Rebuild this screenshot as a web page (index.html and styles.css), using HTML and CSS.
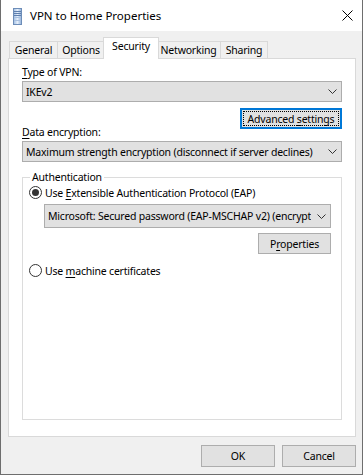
FILE: index.html
```html
<!DOCTYPE html>
<html lang="en">
<head>
  <meta charset="UTF-8">
  <title>VPN to Home Properties</title>
  <link rel="stylesheet" href="styles.css">
</head>
<body>
  <div class="window">
    <div class="titlebar">
      <svg class="title-icon" width="9" height="17" viewBox="0 0 9 17">
        <defs>
          <linearGradient id="tower" x1="0" x2="1" y1="0" y2="0">
            <stop offset="0" stop-color="#9fbde3"/>
            <stop offset="0.5" stop-color="#e4eefa"/>
            <stop offset="1" stop-color="#8eaed8"/>
          </linearGradient>
        </defs>
        <rect x="0.5" y="0.5" width="8" height="16" fill="url(#tower)" stroke="#6d8db8"/>
        <line x1="1" y1="3.5" x2="8" y2="3.5" stroke="#5f7fae"/>
        <line x1="1" y1="5.5" x2="8" y2="5.5" stroke="#5f7fae"/>
        <line x1="1" y1="7.5" x2="8" y2="7.5" stroke="#5f7fae"/>
        <line x1="1" y1="9.5" x2="8" y2="9.5" stroke="#a8c0e0"/>
        <line x1="1" y1="12.5" x2="8" y2="12.5" stroke="#a8c0e0"/>
      </svg>
      <span class="title-text">VPN to Home Properties</span>
      <svg class="close" width="11" height="11" viewBox="0 0 11 11">
        <path d="M0.5 0.5 L10.5 10.5 M10.5 0.5 L0.5 10.5" stroke="#000" stroke-width="1"/>
      </svg>
    </div>

    <div class="tabs">
      <div class="tab tab-general">General</div>
      <div class="tab tab-options">Options</div>
      <div class="tab tab-security selected">Security</div>
      <div class="tab tab-networking">Networking</div>
      <div class="tab tab-sharing">Sharing</div>
    </div>

    <div class="panel">
      <div class="label first"><u>T</u>ype of VPN:</div>
      <div class="select first">
        <span class="value">IKEv2</span>
        <svg class="arrow" width="9" height="5" viewBox="0 0 9 5"><polyline points="0.5,0.5 4.5,4.5 8.5,0.5" fill="none" stroke="#333"/></svg>
      </div>
      <div class="row-right">
        <div class="button focused"><span class="focus-ring"><span>Advanced <u>s</u>ettings</span></span></div>
      </div>
      <div class="label second"><u>D</u>ata encryption:</div>
      <div class="select">
        <span class="value">Maximum strength encryption (disconnect if server declines)</span>
        <svg class="arrow" width="9" height="5" viewBox="0 0 9 5"><polyline points="0.5,0.5 4.5,4.5 8.5,0.5" fill="none" stroke="#333"/></svg>
      </div>

      <fieldset class="group">
        <legend>Authentication</legend>
        <div class="radio-row">
          <span class="radio checked"></span>
          <span>Use <u>E</u>xtensible Authentication Protocol (EAP)</span>
        </div>
        <div class="eap">
          <div class="select">
            <span class="value">Microsoft: Secured password (EAP-MSCHAP v2) (encryption enabled)</span>
            <svg class="arrow" width="9" height="5" viewBox="0 0 9 5"><polyline points="0.5,0.5 4.5,4.5 8.5,0.5" fill="none" stroke="#333"/></svg>
          </div>
          <div class="row-right">
            <div class="button props"><span>P<u>r</u>operties</span></div>
          </div>
        </div>
        <div class="radio-row second">
          <span class="radio"></span>
          <span>Use <u>m</u>achine certificates</span>
        </div>
      </fieldset>
    </div>

    <div class="footer">
      <div class="button dlg"><span>OK</span></div>
      <div class="button dlg"><span>Cancel</span></div>
    </div>
  </div>
</body>
</html>
```

FILE: styles.css
```css
html, body {
  margin: 0;
  padding: 0;
}
body {
  font-family: 'Noto Sans', 'Liberation Sans', sans-serif;
  font-size: 10.5px;
  letter-spacing: -0.2px;
  color: #000;
  background: #fff;
}
u {
  text-decoration: underline;
  text-decoration-thickness: 1px;
  text-underline-offset: 2px;
}
.window {
  width: 363px;
  height: 475px;
  box-sizing: border-box;
  border: 1px solid #6e6e6e;
  border-top: none;
  background: #f0f0f0;
  display: flex;
  flex-direction: column;
}
.titlebar {
  height: 31px;
  background: #fff;
  display: flex;
  align-items: center;
  flex-shrink: 0;
}
.title-icon {
  margin-left: 12px;
  margin-top: 1px;
}
.title-text {
  margin-left: 8px;
  font-size: 11.5px;
  letter-spacing: 0;
  flex: 1;
}
.close {
  margin-right: 9px;
}

/* tabs */
.tabs {
  display: flex;
  align-items: flex-end;
  height: 28px;
  margin-bottom: -1px;
  padding-left: 8px;
}
.tab {
  box-sizing: border-box;
  height: 18px;
  border: 1px solid #d9d9d9;
  border-bottom: none;
  background: #f0f0f0;
  text-align: center;
  line-height: 17px;
  margin-left: -1px;
}
.tab-general { width: 49px; margin-left: 0; }
.tab-options { width: 48px; }
.tab-networking { width: 65px; }
.tab-sharing { width: 48px; }
.tab.selected {
  height: 22px;
  background: #fff;
  position: relative;
  z-index: 1;
  margin-left: -2px;
  margin-right: -2px;
  width: 56px;
  line-height: 16px;
}

/* panel */
.panel {
  box-sizing: border-box;
  margin: 0 6px 0 7px;
  height: 379px;
  background: #fff;
  border: 1px solid #d9d9d9;
  padding: 6px 13px 0 13px;
}
.label {
  line-height: 15px;
  height: 15px;
}
.label.second {
  margin-top: -4px;
}
.select {
  box-sizing: border-box;
  height: 21px;
  margin-top: 1px;
  background: #e1e1e1;
  border: 1px solid #adadad;
  display: flex;
  align-items: center;
  padding: 0 4px 0 3px;
  white-space: nowrap;
  min-width: 0;
}
.select .value {
  flex: 1;
  min-width: 0;
  overflow: hidden;
  text-overflow: clip;
}
.select .arrow {
  margin-left: 6px;
  flex-shrink: 0;
}
.row-right {
  display: flex;
  justify-content: flex-end;
}
.button {
  box-sizing: border-box;
  height: 21px;
  background: #e1e1e1;
  border: 1px solid #adadad;
  display: flex;
  align-items: center;
  justify-content: center;
  white-space: nowrap;
}
.button.focused {
  margin-top: 6px;
  width: 102px;
  border-color: #0078d7;
  box-shadow: inset 0 0 0 1px #0078d7;
  padding: 2px;
}
.focus-ring {
  box-sizing: border-box;
  width: 100%;
  height: 100%;
  border: 1px dotted #000;
  display: flex;
  align-items: center;
  justify-content: center;
}

/* group box */
.group {
  margin: 8px 0 0 0;
  padding: 0 10px 0 6px;
  min-width: 0;
  height: 250px;
  box-sizing: border-box;
  border: 1px solid #dcdcdc;
}
.group legend {
  padding: 0 2px;
  margin-left: 1px;
  line-height: 15px;
}
.radio-row {
  display: flex;
  align-items: center;
  height: 15px;
}
.radio-row.second {
  margin-top: 9px;
}
.radio {
  box-sizing: border-box;
  width: 13px;
  height: 13px;
  border: 1px solid #333;
  border-radius: 50%;
  margin-right: 3px;
  display: flex;
  align-items: center;
  justify-content: center;
  background: #fff;
}
.radio.checked::after {
  content: "";
  width: 7px;
  height: 7px;
  border-radius: 50%;
  background: #333;
}
.eap {
  margin-left: 15px;
  margin-top: 4px;
}
.eap .select {
  height: 24px;
  margin-top: 0;
}
.button.props {
  width: 73px;
  margin-top: 5px;
}

/* footer */
.footer {
  display: flex;
  justify-content: flex-end;
  gap: 7px;
  padding: 8px 6px 0 0;
}
.button.dlg {
  width: 74px;
  height: 22px;
}
```
